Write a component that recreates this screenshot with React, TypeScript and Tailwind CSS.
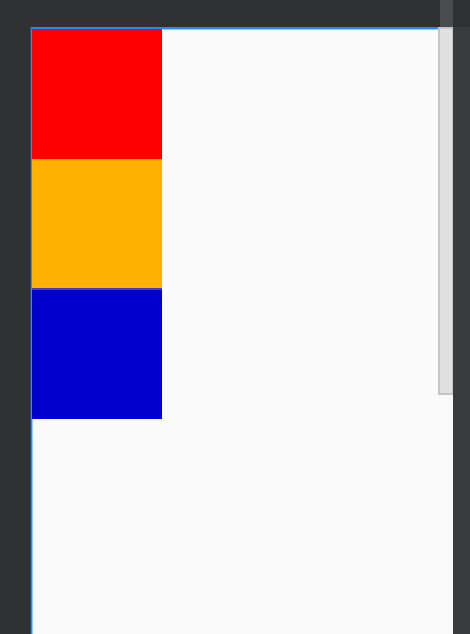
export default function App() {
  return (
    <div className="relative flex h-[634px] w-[470px] flex-col overflow-hidden bg-[#2e3032]">
      <div className="h-[27px] shrink-0" />
      <div className="flex min-h-0 flex-1">
        <div className="w-[31px] shrink-0" />
        <div className="flex-1 border-l border-t-2 border-[#1f8bff] bg-[#fafafa] shadow-[inset_1px_1px_0_#9ccbff,-1px_0_0_#1d4f86]">
          <div className="flex w-[130px] flex-col">
            <div className="h-[130px] bg-[#ff0000]" />
            <div className="h-[129px] bg-[#ffb000]" />
            <div className="h-[2px] bg-[#4b3db5]" />
            <div className="h-[129px] bg-[#0000cc]" />
          </div>
        </div>
        <div className="w-[17px] shrink-0 bg-[#383c3f]" />
      </div>

      {/* scrollbar */}
      <div className="absolute left-[438px] top-0 flex w-[15px] flex-col">
        <div className="ml-[2px] h-[27px] bg-[#4a4b4c]" />
        <div className="h-[368px] border-y-2 border-l-2 border-r border-[#c6c6c6] bg-[#e0e0e0]" />
      </div>
    </div>
  );
}
